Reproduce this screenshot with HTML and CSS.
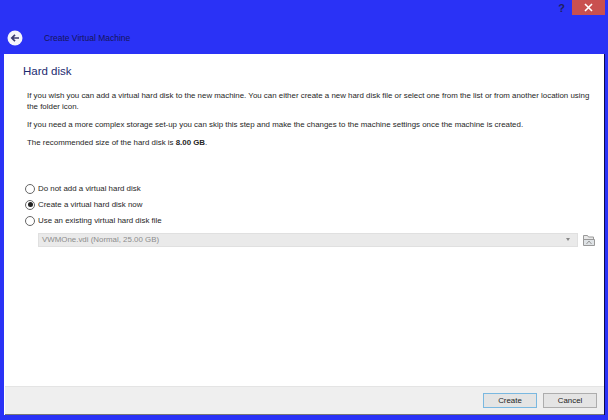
FILE: index.html
```html
<!DOCTYPE html>
<html lang="en">
<head>
<meta charset="utf-8">
<title>Create Virtual Machine</title>
<link rel="stylesheet" href="styles.css">
</head>
<body>
<div class="window">
  <div class="chrome">
    <div class="controls">
      <span class="help">?</span>
      <span class="close"><svg width="9" height="9" viewBox="0 0 9 9"><path d="M1 1l7 7M8 1L1 8" stroke="#fff" stroke-width="1.6"/></svg></span>
    </div>
    <div class="wizard-head">
      <svg class="back" width="16" height="16" viewBox="0 0 16 16"><circle cx="8" cy="8" r="7.5" fill="#f4f4fb"/><path d="M12 8H5M8 4.8L4.8 8 8 11.2" fill="none" stroke="#3a3a70" stroke-width="1.7"/></svg>
      <span class="wizard-title">Create Virtual Machine</span>
    </div>
  </div>
  <div class="panel">
    <main class="content">
      <h1 class="heading">Hard disk</h1>
      <div class="text">
        <p class="para">If you wish you can add a virtual hard disk to the new machine. You can either create a new hard disk file or select one from the list or from another location using the folder icon.</p>
        <p class="para">If you need a more complex storage set-up you can skip this step and make the changes to the machine settings once the machine is created.</p>
        <p class="para">The recommended size of the hard disk is <b>8.00 GB</b>.</p>
      </div>
      <div class="options">
        <label class="option"><span class="radio"></span>Do not add a virtual hard disk</label>
        <label class="option"><span class="radio on"></span>Create a virtual hard disk now</label>
        <label class="option"><span class="radio"></span>Use an existing virtual hard disk file</label>
      </div>
      <div class="file-row">
        <div class="combo"><span>VWMOne.vdi (Normal, 25.00 GB)</span><i class="arrow"></i></div>
        <svg class="folder" width="14" height="15" viewBox="0 0 14 15"><path d="M1.5 13V3.5h4l1 1.5h5v2" fill="#e8e8e8" stroke="#999"/><path d="M1.5 13.5V7.5h11v6z" fill="#dfe3e6" stroke="#999"/><path d="M4.5 12l2.5-3 2.5 3" fill="none" stroke="#999"/></svg>
      </div>
    </main>
    <footer class="footer">
      <button class="btn primary">Create</button>
      <button class="btn">Cancel</button>
    </footer>
  </div>
</div>
</body>
</html>
```
FILE: styles.css
```css
html, body { margin: 0; padding: 0; }
body { width: 608px; height: 420px; overflow: hidden; background: #2a32f6; font-family: "Liberation Sans", sans-serif; font-size: 7.9px; color: #262626; }
.window { width: 608px; height: 420px; display: flex; flex-direction: column; box-sizing: border-box; padding: 0 3px 5px 4px; }
.chrome { height: 54px; flex: none; display: flex; flex-direction: column; }
.controls { height: 15px; display: flex; justify-content: flex-end; align-items: center; }
.help { width: 22px; padding: 1px 0 0 1px; box-sizing: border-box; text-align: center; font: bold 11px "Liberation Sans", sans-serif; color: #20205e; }
.close { width: 33px; height: 15px; background: #c9504f; display: flex; align-items: center; justify-content: center; }
.wizard-head { display: flex; align-items: center; margin-top: 15px; padding-left: 3px; }
.back { flex: none; }
.wizard-title { margin-left: 21px; color: #15155c; font-size: 8.5px; }
.panel { flex: 1; display: flex; flex-direction: column; background: #fff; border-right: 1px solid #0a0a50; }
.content { flex: 1; padding: 10px 5px 0 19px; }
.heading { margin: 0; font-size: 11.5px; font-weight: 400; line-height: 15px; color: #1c2a70; }
.text { margin: 11px 4px 0 4px; }
.para { margin: 0 0 7px; line-height: 11px; }
.options { margin: 35px 0 0 2px; display: flex; flex-direction: column; gap: 5px; }
.option { display: flex; align-items: center; height: 11px; }
.radio { width: 10px; height: 10px; box-sizing: border-box; border: 1px solid #666; border-radius: 50%; margin-right: 3px; background: #fff; position: relative; }
.radio.on::after { content: ""; position: absolute; left: 1.5px; top: 1.5px; width: 5px; height: 5px; border-radius: 50%; background: #222; }
.file-row { display: flex; align-items: center; margin: 6px 0 0 15px; }
.combo { width: 540px; height: 14px; flex: none; box-sizing: border-box; padding: 0 7px 0 3px; background: #eaeaea; border: 1px solid #e0e0e0; color: #8d8d8d; display: flex; align-items: center; justify-content: space-between; }
.arrow { width: 0; height: 0; border: 2.5px solid transparent; border-top: 3px solid #888; border-bottom: 0; }
.folder { margin-left: 4px; flex: none; }
.footer { height: 29px; flex: none; box-sizing: border-box; margin-left: 1px; background: #efefef; border-top: 1px solid #e4e4e4; border-bottom: 1px solid #777; display: flex; justify-content: flex-end; align-items: center; gap: 6px; padding-right: 7px; }
.btn { width: 54px; height: 15px; padding: 0; background: #e4e4e4; border: 1px solid #adadad; font: inherit; color: #222; }
.btn.primary { border-color: #7ab8e0; }
```
